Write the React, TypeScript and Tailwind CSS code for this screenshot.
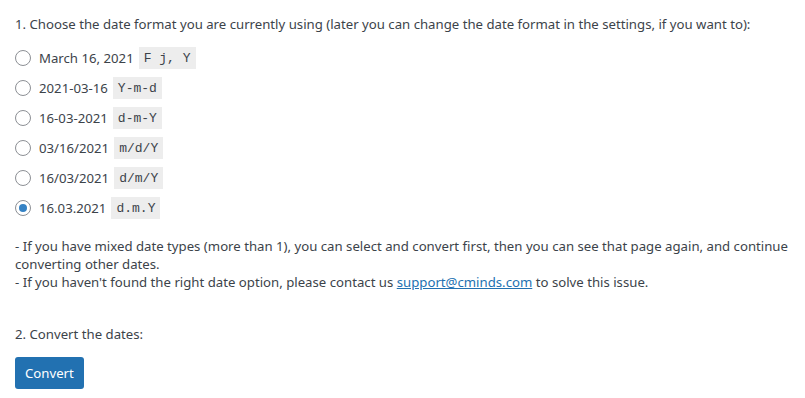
import React, { useState } from "react";

const formats = [
  { label: "March 16, 2021", code: "F j, Y" },
  { label: "2021-03-16", code: "Y-m-d" },
  { label: "16-03-2021", code: "d-m-Y" },
  { label: "03/16/2021", code: "m/d/Y" },
  { label: "16/03/2021", code: "d/m/Y" },
  { label: "16.03.2021", code: "d.m.Y" },
];

function App() {
  const [selected, setSelected] = useState("d.m.Y");

  return (
    <div className="min-h-screen bg-white px-[15px] pt-[15px] text-[13.2px] leading-[18px] text-[#3c434a] font-['Noto_Sans',sans-serif]">
      <p>
        1. Choose the date format you are currently using (later you can change
        the date format in the settings, if you want to):
      </p>

      <div className="mt-[14px] flex flex-col gap-[8px]">
        {formats.map((f) => (
          <label key={f.code} className="flex h-[22px] items-center cursor-pointer">
            <span className="mr-[8px] flex h-4 w-4 shrink-0 items-center justify-center rounded-full border border-[#8c8f94] bg-white">
              {selected === f.code && (
                <span className="h-2 w-2 rounded-full bg-[#3582c4]" />
              )}
            </span>
            <input
              type="radio"
              name="date_format"
              value={f.code}
              checked={selected === f.code}
              onChange={() => setSelected(f.code)}
              className="sr-only"
            />
            <span>{f.label}</span>
            <code className="ml-[5px] bg-[#ededed] px-[5px] pt-[3px] pb-[2px] text-[13px] leading-[17px] font-['Liberation_Mono',monospace]">
              {f.code}
            </code>
          </label>
        ))}
      </div>

      <p className="mt-[18px]">
        - If you have mixed date types (more than 1), you can select and convert
        first, then you can see that page again, and continue converting other
        dates.
        <br />- If you haven't found the right date option, please contact us{" "}
        <a href="#" className="text-[#2271b1] underline">
          support@cminds.com
        </a>{" "}
        to solve this issue.
      </p>

      <p className="mt-[34px]">2. Convert the dates:</p>

      <button
        type="button"
        className="mt-[14px] h-[32px] rounded-[3px] bg-[#2271b1] px-[10px] text-[13.2px] text-white"
      >
        Convert
      </button>
    </div>
  );
}

export default App;
